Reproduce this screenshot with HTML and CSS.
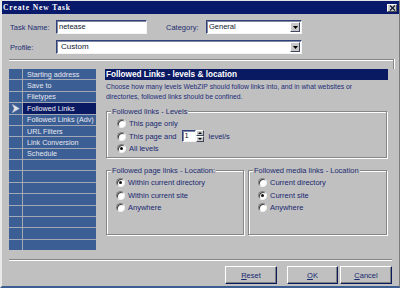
FILE: index.html
```html
<!DOCTYPE html>
<html>
<head>
<meta charset="utf-8">
<link rel="stylesheet" href="styles.css">
</head>
<body>
<div class="window">
  <div class="titlebar">
    <span class="title">Create New Task</span>
    <span class="close"><svg width="7" height="6" viewBox="0 0 7 6"><path d="M1 0.5 L6 5.5 M6 0.5 L1 5.5" stroke="#101830" stroke-width="1.3"/></svg></span>
  </div>
  <div class="form">
    <div class="frow">
      <span class="lbl w-lbl">Task Name:</span>
      <div class="field w-task">netease</div>
      <span class="lbl w-cat-lbl">Category:</span>
      <div class="field select w-cat"><span class="val">General</span><span class="ddbtn"><svg width="5" height="3" viewBox="0 0 5 3"><path d="M0 0 H5 L2.5 3 Z" fill="#000"/></svg></span></div>
    </div>
    <div class="frow">
      <span class="lbl w-lbl">Profile:</span>
      <div class="field select w-profile"><span class="val big">Custom</span><span class="ddbtn"><svg width="5" height="3" viewBox="0 0 5 3"><path d="M0 0 H5 L2.5 3 Z" fill="#000"/></svg></span></div>
    </div>
  </div>
  <div class="frame"></div>
  <div class="main">
    <div class="panel">
      <div class="mk"></div><div class="nm">Starting address</div>
      <div class="mk"></div><div class="nm">Save to</div>
      <div class="mk"></div><div class="nm">Filetypes</div>
      <div class="mk"><svg width="8" height="9" viewBox="0 0 8 9"><path d="M0 0 L7.5 4.5 L0 9 L2.2 4.5 Z" fill="#e4e6ee" stroke="#9aa0b4" stroke-width="0.6"/></svg></div><div class="nm sel">Followed Links</div>
      <div class="mk"></div><div class="nm">Followed Links (Adv)</div>
      <div class="mk"></div><div class="nm">URL Filters</div>
      <div class="mk"></div><div class="nm">Link Conversion</div>
      <div class="mk"></div><div class="nm">Schedule</div>
      <div class="mk"></div><div class="nm"></div>
      <div class="mk"></div><div class="nm"></div>
      <div class="mk"></div><div class="nm"></div>
      <div class="mk"></div><div class="nm"></div>
      <div class="mk"></div><div class="nm"></div>
      <div class="mk"></div><div class="nm"></div>
      <div class="mk"></div><div class="nm"></div>
      <div class="mk"></div><div class="nm"></div>
    </div>
    <div class="content">
      <div class="hdr">Followed Links - levels &amp; location</div>
      <div class="desc">Choose how many levels WebZIP should follow links into, and in what websites or<br>directories, followed links should be confined.</div>
      <div class="group g1">
        <span class="legend">Followed links - Levels</span>
        <div class="opt p10"><span class="radio"></span><span>This page only</span></div>
        <div class="opt p10"><span class="radio"></span><span>This page and</span>
          <span class="spin"><span class="spinval">1</span><span class="spinbtns"><span class="sb"><svg width="4" height="2" viewBox="0 0 4 2"><path d="M0 2 H4 L2 0 Z" fill="#000"/></svg></span><span class="sb"><svg width="4" height="2" viewBox="0 0 4 2"><path d="M0 0 H4 L2 2 Z" fill="#000"/></svg></span></span></span>
          <span class="lvl">level/s</span></div>
        <div class="opt p10"><span class="radio on"></span><span>All levels</span></div>
      </div>
      <div class="grow">
        <div class="group g2">
          <span class="legend">Followed page links - Location:</span>
          <div class="opt p9"><span class="radio on"></span><span>Within current directory</span></div>
          <div class="opt p9"><span class="radio"></span><span>Within current site</span></div>
          <div class="opt p9"><span class="radio"></span><span>Anywhere</span></div>
        </div>
        <div class="group g3">
          <span class="legend">Followed media links - Location</span>
          <div class="opt p9"><span class="radio"></span><span>Current directory</span></div>
          <div class="opt p9"><span class="radio on"></span><span>Current site</span></div>
          <div class="opt p9"><span class="radio"></span><span>Anywhere</span></div>
        </div>
      </div>
    </div>
  </div>
  <div class="sep"></div>
  <div class="buttons">
    <div class="btn b-reset"><u>R</u>eset</div>
    <div class="btn b-ok"><u>O</u>K</div>
    <div class="btn b-cancel"><u>C</u>ancel</div>
  </div>
</div>
</body>
</html>
```
FILE: styles.css
```css
* { box-sizing: border-box; }
html, body { margin: 0; padding: 0; }
body {
  width: 400px; height: 288px; overflow: hidden;
  background: #c0c0c0;
  font-family: "Liberation Sans", Arial, sans-serif;
  font-size: 7.5px;
  color: #182870;
}
.window {
  width: 400px; height: 288px;
  background: #c0c0c0;
  border-top: 1px solid #e4e4e4;
  border-left: 2px solid #e8e8e8;
  border-right: 1px solid #7c7c7c;
  border-bottom: 2px solid #3c5e92;
}
.titlebar {
  height: 13px;
  background: #08186a;
  display: flex; align-items: center; justify-content: space-between;
  padding: 0 2px 0 1px;
}
.title {
  color: #fff; font-weight: bold; font-size: 7.5px;
  letter-spacing: 0.9px;
  font-family: "Liberation Serif", serif;
}
.close {
  width: 10px; height: 8px;
  background: #d0d0d0;
  border: 1px solid; border-color: #fff #505050 #505050 #fff;
  display: flex; align-items: center; justify-content: center;
}
.form { padding-left: 8px; }
.frow { display: flex; align-items: center; height: 14px; margin-top: 6px; }
.lbl { color: #1c2c70; white-space: nowrap; }
.w-lbl { width: 46px; }
.w-cat-lbl { width: 40px; margin-left: 19px; }
.field {
  height: 14px;
  background: #fff;
  border: 1px solid; border-color: #30407a #f4f4f4 #f4f4f4 #30407a;
  box-shadow: inset 1px 1px 0 #8088a0;
  color: #101830;
  padding-left: 2px;
  line-height: 12px;
  font-size: 7.5px;
}
.w-task { width: 91px; }
.w-cat { width: 96px; }
.w-profile { width: 246px; }
.select { display: flex; align-items: center; justify-content: space-between; padding-right: 1px; }
.val.big { font-size: 8px; padding-left: 2px; }
.ddbtn {
  width: 10px; height: 10px;
  background: #c8c8c8;
  border: 1px solid; border-color: #fff #404860 #404860 #fff;
  display: flex; align-items: center; justify-content: center;
}
.frame {
  margin: 5px 0 0 7px;
  width: 385px; height: 10px;
  border-top: 1px solid #868686;
  border-right: 1px solid #868686;
  box-shadow: inset 0 1px 0 #fff, 1px 0 0 #fff;
}
.main { display: flex; padding-left: 7px; height: 181px; }
.panel {
  width: 87px; height: 181px;
  display: grid;
  grid-template-columns: 13px 73px;
  grid-template-rows: repeat(16, 1fr);
  gap: 1px;
  background: #a2a8b6;
}
.mk { background: #3b5e94; display: flex; align-items: center; justify-content: center; }
.nm {
  background: #3b5e94; color: #e6e8f0;
  padding-left: 4px; white-space: nowrap; overflow: hidden;
  display: flex; align-items: center;
  font-size: 7.2px;
}
.nm.sel { background: #0a1a62; color: #f0f0f8; }
.content { margin-left: 9px; width: 283px; }
.hdr {
  height: 11px; background: #0a1a62; color: #fff;
  font-weight: bold; font-size: 8.2px; line-height: 11px;
  padding-left: 1px; white-space: nowrap;
}
.desc {
  margin-top: 2px; line-height: 10px;
  font-size: 6.8px; padding-left: 1px; white-space: nowrap;
  color: #1c2c78;
}
.group {
  border: 1px solid #868686;
  box-shadow: inset 1px 1px 0 #fff, 1px 1px 0 #fff;
}
.legend {
  display: table;
  margin: -5px 0 1.5px 4px;
  padding: 0 1px;
  background: #c0c0c0;
  height: 9px; line-height: 9px;
  white-space: nowrap;
  color: #1c2c70;
}
.g1 { margin: 9px 0 0 1px; width: 281px; height: 47px; }
.grow { display: flex; gap: 4px; margin: 12px 0 0 1px; }
.g2 { width: 138px; height: 65px; }
.g3 { width: 139px; height: 65px; }
.opt { display: flex; align-items: center; height: 12.5px; gap: 3px; white-space: nowrap; }
.p10 { padding-left: 10px; }
.p9 { padding-left: 9px; }
.radio {
  width: 9px; height: 9px; border-radius: 50%;
  background: #fff;
  border: 1px solid; border-color: #808080 #f0f0f0 #f0f0f0 #808080;
  box-shadow: inset 1px 1px 0 #404040;
  display: flex; align-items: center; justify-content: center;
  flex: none;
}
.radio.on::after {
  content: ""; width: 3px; height: 3px; border-radius: 50%; background: #101010;
}
.spin { display: flex; margin-left: 2px; height: 12px; }
.spinval {
  width: 14px; height: 12px; background: #fff;
  border: 1px solid; border-color: #30407a #f4f4f4 #f4f4f4 #30407a;
  box-shadow: inset 1px 1px 0 #8088a0;
  padding-left: 2px; line-height: 10px; color: #101830;
}
.spinbtns { display: flex; flex-direction: column; width: 8px; }
.sb {
  height: 6px; background: #c8c8c8;
  border: 1px solid; border-color: #fff #404860 #404860 #fff;
  display: flex; align-items: center; justify-content: center;
}
.lvl { margin-left: 2px; }
.sep {
  margin: 9px 0 0 7px; width: 383px;
  border-top: 1px solid #868686; border-bottom: 1px solid #fff;
}
.buttons { display: flex; justify-content: flex-end; margin-top: 5px; padding-right: 7px; }
.btn {
  height: 18px;
  border: 1px solid; border-color: #fff #0c1c5c #0c1c5c #fff;
  box-shadow: inset -1px -1px 0 #808080;
  display: flex; align-items: center; justify-content: center;
  color: #182870; font-size: 7.5px;
}
.b-reset { width: 52px; margin-right: 10px; }
.b-ok { width: 51px; margin-right: 2px; }
.b-cancel { width: 52px; }
```
